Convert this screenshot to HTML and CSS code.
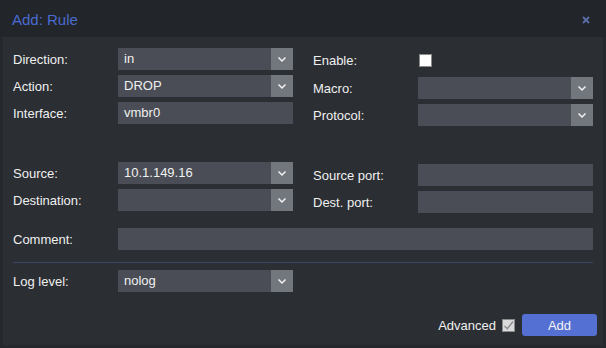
FILE: index.html
```html
<!DOCTYPE html>
<html lang="en">
<head>
    <meta charset="UTF-8">
    <meta name="viewport" content="width=device-width, initial-scale=1.0">
    <title>Add: Rule</title>
    <link rel="stylesheet" href="styles.css">
</head>
<body>
    <div class="window">
        <div class="header">
            <span class="title">Add: Rule</span>
            <span class="close">
                <svg width="8" height="8" viewBox="0 0 8 8"><path d="M1 1L7 7M7 1L1 7" stroke="#5a6ea8" stroke-width="1.8"/></svg>
            </span>
        </div>

        <div class="body">
            <div class="columns">
                <div class="column">
                    <div class="row">
                        <label>Direction:</label>
                        <div class="field combo"><span class="value">in</span><span class="trigger"></span></div>
                    </div>
                    <div class="row">
                        <label>Action:</label>
                        <div class="field combo"><span class="value">DROP</span><span class="trigger"></span></div>
                    </div>
                    <div class="row">
                        <label>Interface:</label>
                        <div class="field"><span class="value">vmbr0</span></div>
                    </div>
                    <div class="spacer"></div>
                    <div class="row">
                        <label>Source:</label>
                        <div class="field combo"><span class="value">10.1.149.16</span><span class="trigger"></span></div>
                    </div>
                    <div class="row">
                        <label>Destination:</label>
                        <div class="field combo"><span class="value"></span><span class="trigger"></span></div>
                    </div>
                </div>

                <div class="column">
                    <div class="row check-row">
                        <label>Enable:</label>
                        <span class="checkbox"></span>
                    </div>
                    <div class="row">
                        <label>Macro:</label>
                        <div class="field combo"><span class="value"></span><span class="trigger"></span></div>
                    </div>
                    <div class="row">
                        <label>Protocol:</label>
                        <div class="field combo"><span class="value"></span><span class="trigger"></span></div>
                    </div>
                    <div class="spacer"></div>
                    <div class="row">
                        <label>Source port:</label>
                        <div class="field"><span class="value"></span></div>
                    </div>
                    <div class="row">
                        <label>Dest. port:</label>
                        <div class="field"><span class="value"></span></div>
                    </div>
                </div>
            </div>

            <div class="row wide">
                <label>Comment:</label>
                <div class="field"><span class="value"></span></div>
            </div>

            <div class="separator"></div>

            <div class="row log">
                <label>Log level:</label>
                <div class="field combo"><span class="value">nolog</span><span class="trigger"></span></div>
            </div>
        </div>

        <div class="footer">
            <span class="adv-label">Advanced</span>
            <span class="checkbox checked">
                <svg width="11" height="11" viewBox="0 0 11 11"><path d="M1.5 6L4.3 8.8L10 1.5" fill="none" stroke="#8c8c8c" stroke-width="1.4"/></svg>
            </span>
            <button class="btn">Add</button>
        </div>
    </div>
</body>
</html>
```

FILE: styles.css
```css
* {
    margin: 0;
    padding: 0;
    box-sizing: border-box;
}

body {
    background-color: #25282c;
    font-family: "Liberation Sans", Arial, sans-serif;
    font-size: 13px;
    color: #f0f0f0;
}

.window {
    width: 606px;
    height: 348px;
    background-color: #2b2e33;
    border: 3px solid #25282c;
    border-top: 0;
    display: flex;
    flex-direction: column;
}

.header {
    height: 37px;
    margin: 0 -3px;
    padding: 0 16px 0 12px;
    background-color: #222529;
    display: flex;
    align-items: center;
    justify-content: space-between;
}

.title {
    font-size: 15px;
    color: #4a6bd0;
    padding-top: 2px;
}

.close {
    display: flex;
    padding-top: 2px;
}

.body {
    padding: 11px 10px 0 10px;
}

.columns {
    display: flex;
    gap: 20px;
}

.column {
    width: 280px;
    display: flex;
    flex-direction: column;
    gap: 5px;
}

.spacer {
    height: 28px;
}

.row {
    display: flex;
    height: 22px;
    align-items: center;
}

.row label {
    width: 105px;
    flex-shrink: 0;
    line-height: 22px;
    padding-top: 1px;
}

.check-row {
    height: 24px;
}

.field {
    width: 175px;
    height: 22px;
    background-color: #4a4d55;
    display: flex;
}

.field .value {
    flex: 1;
    padding-left: 6px;
    line-height: 22px;
}

.trigger {
    width: 22px;
    height: 22px;
    background-color: #72767d;
    background-image: url("data:image/svg+xml,%3Csvg xmlns='http://www.w3.org/2000/svg' width='22' height='22'%3E%3Cpath d='M7.5 9.5L11 13L14.5 9.5' fill='none' stroke='%23f2f2f2' stroke-width='1.5'/%3E%3C/svg%3E");
}

.checkbox {
    width: 13px;
    height: 13px;
    margin-left: 1px;
    background-color: #ffffff;
    border: 1px solid #8a8a8a;
    display: flex;
    align-items: center;
    justify-content: center;
}

.checkbox.checked {
    background-color: #dadada;
    margin-left: 0;
}

.wide {
    margin-top: 15px;
}

.wide .field {
    width: 475px;
}

.separator {
    height: 1px;
    margin-top: 12px;
    background-color: #3a4562;
}

.log {
    margin-top: 7px;
}

.footer {
    margin-top: auto;
    padding: 0 6px 9px 0;
    display: flex;
    align-items: center;
    justify-content: flex-end;
}

.adv-label {
    margin-right: 6px;
}

.btn {
    width: 75px;
    height: 22px;
    margin-left: 7px;
    border: 0;
    border-radius: 3px;
    background-color: #5470d2;
    color: #f4f4f4;
    font-family: "Liberation Sans", Arial, sans-serif;
    font-size: 13px;
}
```
